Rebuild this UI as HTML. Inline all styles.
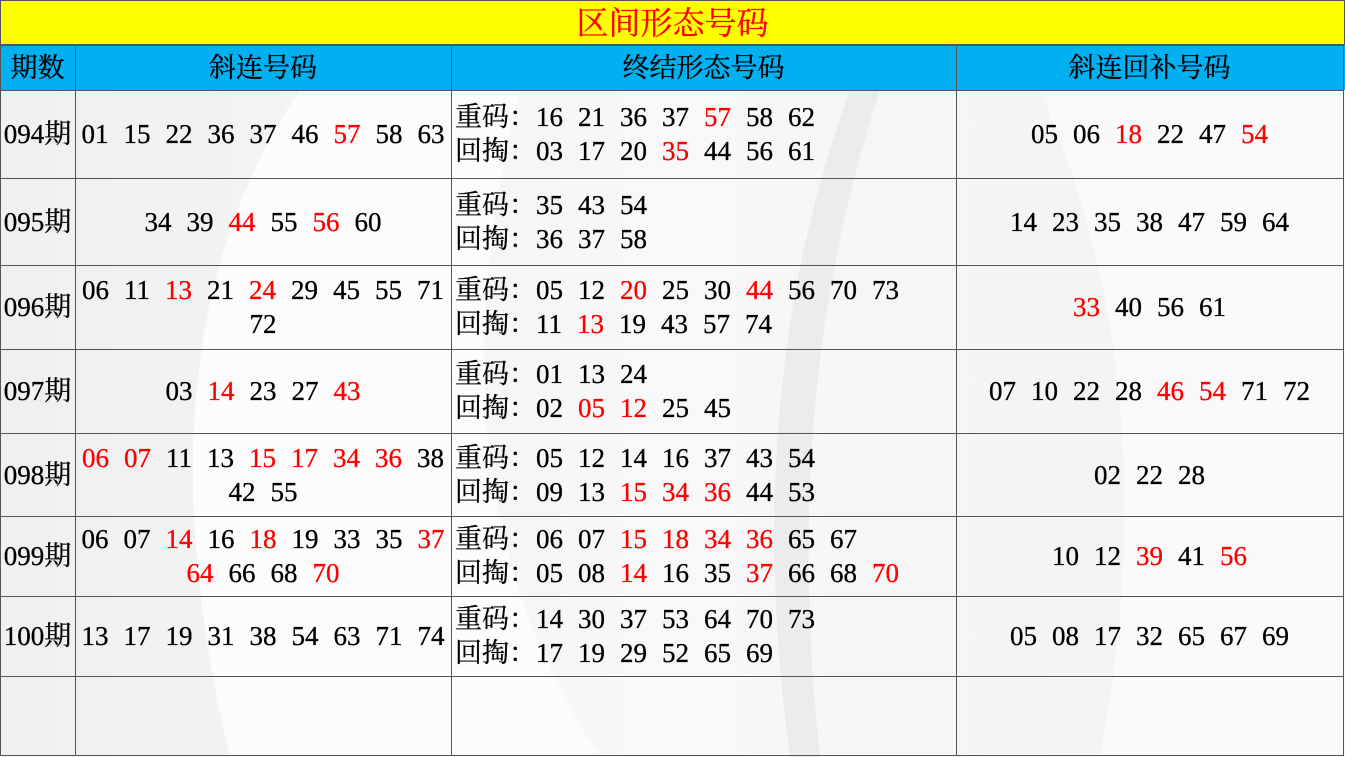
<!DOCTYPE html>
<html><head><meta charset="utf-8"><style>
*{margin:0;padding:0;box-sizing:border-box}
body{width:1345px;height:757px;overflow:hidden;background:#fff;font-family:"Liberation Serif","Noto Serif CJK SC","Noto Serif CJK JP",serif;font-size:27px;color:#000;position:relative;-webkit-text-stroke:0.3px}
.bg{position:absolute;left:0;top:90px;width:1345px;height:667px}
.c{position:absolute;display:flex;flex-direction:column;justify-content:center;line-height:34px;white-space:nowrap}
.ctr{align-items:center;text-align:center}
.l{padding-left:4px}
.r{color:#f00}
.n span{margin:0 7.5px}
.n span:first-child{margin-left:0}
.n span:last-child{margin-right:0}
.vl{position:absolute;top:45px;width:1px;height:711px;background:#555}
.hl{position:absolute;left:0;width:1344px;height:1px;background:#555}
</style></head><body>
<svg class="bg" viewBox="0 0 1345 667" preserveAspectRatio="none">
<defs><linearGradient id="g" x1="0" y1="0" x2="1" y2="0"><stop offset="0" stop-color="#f0f0f0"/><stop offset="0.5" stop-color="#f8f8f8"/><stop offset="1" stop-color="#f2f2f2"/></linearGradient></defs>
<rect width="1345" height="667" fill="url(#g)"/>
<path d="M300 0 Q130 250 230 667 L600 667 Q420 400 520 0Z" fill="#fcfcfc"/>
<path d="M880 0 Q780 300 820 667 L790 667 Q740 300 850 0Z" fill="#ececec"/>
<path d="M1040 0 Q1170 300 1100 667 L1345 667 L1345 0Z" fill="#fafafa"/>
</svg>
<div style="position:absolute;left:0;top:0;width:1345px;height:45px;background:#ff0;border:1px solid #555;color:#f00;font-size:32px;text-align:center;line-height:44px">区间形态号码</div>
<div style="position:absolute;left:0;top:45px;width:1345px;height:45px;background:#00b0f0"></div>
<div class="c ctr" style="left:0;top:45px;width:75px;height:45px">期数</div>
<div class="c ctr" style="left:75px;top:45px;width:376px;height:45px">斜连号码</div>
<div class="c ctr" style="left:451px;top:45px;width:505px;height:45px">终结形态号码</div>
<div class="c ctr" style="left:956px;top:45px;width:387px;height:45px">斜连回补号码</div>

<div class="vl" style="left:0"></div><div class="vl" style="left:75px"></div><div class="vl" style="left:451px"></div><div class="vl" style="left:956px"></div><div class="vl" style="left:1343px"></div>
<div class="hl" style="top:45px"></div><div class="hl" style="top:90px"></div><div class="hl" style="top:178px"></div><div class="hl" style="top:265px"></div><div class="hl" style="top:349px"></div><div class="hl" style="top:433px"></div><div class="hl" style="top:516px"></div><div class="hl" style="top:596px"></div><div class="hl" style="top:676px"></div><div class="hl" style="top:755px"></div>

<div class="c ctr" style="left:0;top:90px;width:75px;height:88px">094期</div>
<div class="c ctr n" style="left:75px;top:90px;width:376px;height:88px"><div><span>01</span><span>15</span><span>22</span><span>36</span><span>37</span><span>46</span><span class="r">57</span><span>58</span><span>63</span></div></div>
<div class="c l n" style="left:451px;top:90px;width:505px;height:88px"><div>重码：<span>16</span><span>21</span><span>36</span><span>37</span><span class="r">57</span><span>58</span><span>62</span></div><div>回掏：<span>03</span><span>17</span><span>20</span><span class="r">35</span><span>44</span><span>56</span><span>61</span></div></div>
<div class="c ctr n" style="left:956px;top:90px;width:387px;height:88px"><div><span>05</span><span>06</span><span class="r">18</span><span>22</span><span>47</span><span class="r">54</span></div></div>

<div class="c ctr" style="left:0;top:178px;width:75px;height:87px">095期</div>
<div class="c ctr n" style="left:75px;top:178px;width:376px;height:87px"><div><span>34</span><span>39</span><span class="r">44</span><span>55</span><span class="r">56</span><span>60</span></div></div>
<div class="c l n" style="left:451px;top:178px;width:505px;height:87px"><div>重码：<span>35</span><span>43</span><span>54</span></div><div>回掏：<span>36</span><span>37</span><span>58</span></div></div>
<div class="c ctr n" style="left:956px;top:178px;width:387px;height:87px"><div><span>14</span><span>23</span><span>35</span><span>38</span><span>47</span><span>59</span><span>64</span></div></div>

<div class="c ctr" style="left:0;top:265px;width:75px;height:84px">096期</div>
<div class="c ctr n" style="left:75px;top:265px;width:376px;height:84px"><div><span>06</span><span>11</span><span class="r">13</span><span>21</span><span class="r">24</span><span>29</span><span>45</span><span>55</span><span>71</span></div><div><span>72</span></div></div>
<div class="c l n" style="left:451px;top:265px;width:505px;height:84px"><div>重码：<span>05</span><span>12</span><span class="r">20</span><span>25</span><span>30</span><span class="r">44</span><span>56</span><span>70</span><span>73</span></div><div>回掏：<span>11</span><span class="r">13</span><span>19</span><span>43</span><span>57</span><span>74</span></div></div>
<div class="c ctr n" style="left:956px;top:265px;width:387px;height:84px"><div><span class="r">33</span><span>40</span><span>56</span><span>61</span></div></div>

<div class="c ctr" style="left:0;top:349px;width:75px;height:84px">097期</div>
<div class="c ctr n" style="left:75px;top:349px;width:376px;height:84px"><div><span>03</span><span class="r">14</span><span>23</span><span>27</span><span class="r">43</span></div></div>
<div class="c l n" style="left:451px;top:349px;width:505px;height:84px"><div>重码：<span>01</span><span>13</span><span>24</span></div><div>回掏：<span>02</span><span class="r">05</span><span class="r">12</span><span>25</span><span>45</span></div></div>
<div class="c ctr n" style="left:956px;top:349px;width:387px;height:84px"><div><span>07</span><span>10</span><span>22</span><span>28</span><span class="r">46</span><span class="r">54</span><span>71</span><span>72</span></div></div>

<div class="c ctr" style="left:0;top:433px;width:75px;height:83px">098期</div>
<div class="c ctr n" style="left:75px;top:433px;width:376px;height:83px"><div><span class="r">06</span><span class="r">07</span><span>11</span><span>13</span><span class="r">15</span><span class="r">17</span><span class="r">34</span><span class="r">36</span><span>38</span></div><div><span>42</span><span>55</span></div></div>
<div class="c l n" style="left:451px;top:433px;width:505px;height:83px"><div>重码：<span>05</span><span>12</span><span>14</span><span>16</span><span>37</span><span>43</span><span>54</span></div><div>回掏：<span>09</span><span>13</span><span class="r">15</span><span class="r">34</span><span class="r">36</span><span>44</span><span>53</span></div></div>
<div class="c ctr n" style="left:956px;top:433px;width:387px;height:83px"><div><span>02</span><span>22</span><span>28</span></div></div>

<div class="c ctr" style="left:0;top:516px;width:75px;height:80px">099期</div>
<div class="c ctr n" style="left:75px;top:516px;width:376px;height:80px"><div><span>06</span><span>07</span><span class="r">14</span><span>16</span><span class="r">18</span><span>19</span><span>33</span><span>35</span><span class="r">37</span></div><div><span class="r">64</span><span>66</span><span>68</span><span class="r">70</span></div></div>
<div class="c l n" style="left:451px;top:516px;width:505px;height:80px"><div>重码：<span>06</span><span>07</span><span class="r">15</span><span class="r">18</span><span class="r">34</span><span class="r">36</span><span>65</span><span>67</span></div><div>回掏：<span>05</span><span>08</span><span class="r">14</span><span>16</span><span>35</span><span class="r">37</span><span>66</span><span>68</span><span class="r">70</span></div></div>
<div class="c ctr n" style="left:956px;top:516px;width:387px;height:80px"><div><span>10</span><span>12</span><span class="r">39</span><span>41</span><span class="r">56</span></div></div>

<div class="c ctr" style="left:0;top:596px;width:75px;height:80px">100期</div>
<div class="c ctr n" style="left:75px;top:596px;width:376px;height:80px"><div><span>13</span><span>17</span><span>19</span><span>31</span><span>38</span><span>54</span><span>63</span><span>71</span><span>74</span></div></div>
<div class="c l n" style="left:451px;top:596px;width:505px;height:80px"><div>重码：<span>14</span><span>30</span><span>37</span><span>53</span><span>64</span><span>70</span><span>73</span></div><div>回掏：<span>17</span><span>19</span><span>29</span><span>52</span><span>65</span><span>69</span></div></div>
<div class="c ctr n" style="left:956px;top:596px;width:387px;height:80px"><div><span>05</span><span>08</span><span>17</span><span>32</span><span>65</span><span>67</span><span>69</span></div></div>
</body></html>
